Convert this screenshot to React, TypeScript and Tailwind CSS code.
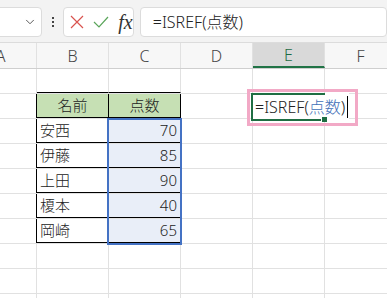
import { ChevronDown } from "lucide-react";

const cols = ["A", "B", "C", "D", "E", "F"];

const data: [string, string][] = [
  ["安西", "70"],
  ["伊藤", "85"],
  ["上田", "90"],
  ["榎本", "40"],
  ["岡崎", "65"],
];

const font = "font-['Noto_Sans','Noto_Sans_CJK_JP',sans-serif]";

function Cell({ className = "", children }: { className?: string; children?: React.ReactNode }) {
  return (
    <div className={`flex h-full w-[72px] shrink-0 items-center border-r border-[#e1e1e1] ${className}`}>
      {children}
    </div>
  );
}

function Row({ r }: { r: number }) {
  // r = 1..10
  const inTable = r >= 2 && r <= 7;
  const isHead = r === 2;
  const item = r >= 3 && r <= 7 ? data[r - 3] : null;

  return (
    <div className="flex h-[25px] border-b border-[#e1e1e1]">
      <Cell className={inTable ? "!border-black" : ""} />
      <Cell
        className={`${inTable ? "!border-black" : ""} ${r === 1 || inTable ? "border-b !border-b-black" : ""} ${
          isHead ? "justify-center bg-[#c6e0b4]" : "pl-[3px]"
        }`}
      >
        {isHead ? "名前" : item?.[0]}
      </Cell>
      <Cell
        className={`${inTable ? "!border-black" : ""} ${r === 1 || inTable ? "border-b !border-b-black" : ""} ${
          isHead ? "justify-center bg-[#c6e0b4]" : item ? "justify-end bg-[#e9eef8] pr-[3px]" : ""
        }`}
      >
        {isHead ? "点数" : item?.[1]}
      </Cell>
      <Cell />
      <Cell />
      <Cell />
    </div>
  );
}

export default function App() {
  return (
    <div className={`relative h-[298px] w-[387px] overflow-hidden bg-white text-[15px] font-light text-[#222] ${font}`}>
      {/* formula bar */}
      <div className="flex h-[43px] items-start border-b border-[#dcdcdc] bg-[#f3f3f3] pt-[7px]">
        <div className="ml-[-10px] flex h-[30px] w-[55px] items-center justify-end rounded-[4px] border border-[#dcdcdc] bg-white pr-[4px]">
          <ChevronDown size={14} strokeWidth={1.5} className="text-[#444]" />
        </div>
        <div className="flex h-[30px] w-[22px] flex-col items-center justify-center gap-[2px]">
          <span className="h-[2px] w-[2px] bg-[#444]" />
          <span className="h-[2px] w-[2px] bg-[#444]" />
          <span className="h-[2px] w-[2px] bg-[#444]" />
        </div>
        <div className="flex h-[30px] w-[72px] items-center rounded-[4px] border border-[#dcdcdc] bg-white">
          <svg width="14" height="14" viewBox="0 0 14 14" className="ml-[6px]">
            <path d="M1 1 L13 13 M13 1 L1 13" stroke="#d9534f" strokeWidth="1.2" fill="none" />
          </svg>
          <svg width="16" height="14" viewBox="0 0 16 14" className="ml-[9px]">
            <path d="M1 7 L6 12 L15 2" stroke="#5aa55a" strokeWidth="1.2" fill="none" />
          </svg>
          <span className="ml-[9px] font-['Liberation_Serif',serif] text-[20px] font-normal italic leading-none text-[#333]">
            fx
          </span>
        </div>
        <div className="ml-[6px] flex h-[30px] w-[260px] items-center rounded-[4px] border border-[#dcdcdc] bg-white pl-[12px] text-[16px] text-[#222]">
          =ISREF(点数)
        </div>
      </div>

      {/* sheet */}
      <div className="ml-[-35px]">
        <div className="flex h-[26px] border-b border-[#cfcfcf] bg-[#f7f7f7] text-[16px] text-[#444]">
          {cols.map((c) => (
            <div
              key={c}
              className={`flex w-[72px] shrink-0 items-center justify-center border-r border-[#e1e1e1] ${
                c === "E" ? "border-b-2 !border-b-[#217346] bg-[#d9d9d9] text-[#1d6b44]" : ""
              }`}
            >
              {c}
            </div>
          ))}
        </div>
        {Array.from({ length: 10 }, (_, i) => (
          <Row key={i} r={i + 1} />
        ))}
      </div>

      {/* selection C3:C7 */}
      <div className="pointer-events-none absolute left-[107px] top-[118px] h-[127px] w-[75px] border-2 border-[#4472c4]" />

      {/* annotation */}
      <div className="pointer-events-none absolute left-[247px] top-[89px] h-[37px] w-[111px] border-[3px] border-[#f2a9c6]" />

      {/* editing cell E2 */}
      <div className="absolute left-[251px] top-[93px] flex h-[27px] w-[98px] items-center bg-white pl-[4px] text-[16px]">
        <span>=ISREF(</span>
        <span className="text-[#3f6fb8]">点数</span>
        <span>)</span>
        <span className="ml-[2px] h-[22px] w-[1px] bg-black" />
      </div>
      <div className="absolute left-[251px] top-[93px] h-[2px] w-[74px] bg-[#1f6e43]" />
      <div className="absolute left-[251px] top-[93px] h-[27px] w-[2px] bg-[#1f6e43]" />
      <div className="absolute left-[251px] top-[119px] h-[2px] w-[70px] bg-[#1f6e43]" />
      <div className="absolute left-[322px] top-[117px] h-[5px] w-[5px] bg-[#1f6e43]" />
    </div>
  );
}
